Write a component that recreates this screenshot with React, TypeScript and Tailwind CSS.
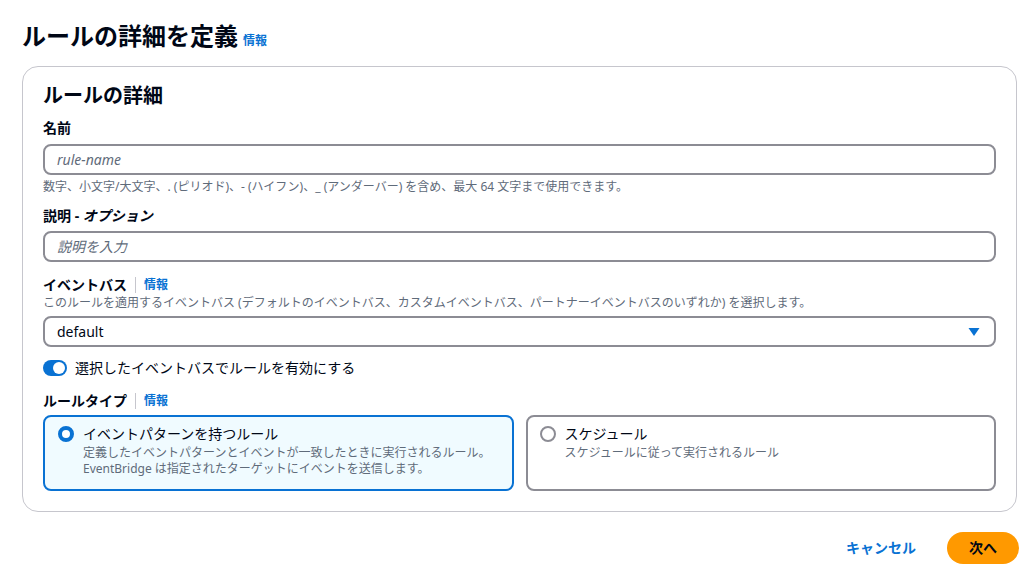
import React, { useState } from 'react';

const font = { fontFamily: '"Noto Sans", "Noto Sans CJK JP", sans-serif' };

const InfoLink: React.FC<{ divider?: boolean }> = ({ divider }) => (
  <span className="flex items-center">
    {divider && <span className="mx-2 h-4 w-px bg-[#c6c6cd]" />}
    <span className="text-xs font-bold text-[#0972d3]">情報</span>
  </span>
);

const TextInput: React.FC<{ placeholder: string }> = ({ placeholder }) => (
  <input
    placeholder={placeholder}
    className="h-[31px] w-full rounded-lg border-2 border-[#8c8c94] bg-white px-3 text-sm text-[#000716] outline-none placeholder:italic placeholder:text-[#5f6b7a]"
  />
);

const Tile: React.FC<{ selected: boolean; title: string; lines: string[]; onClick: () => void }> = ({
  selected,
  title,
  lines,
  onClick,
}) => (
  <div
    onClick={onClick}
    className={
      'flex h-[76px] cursor-pointer gap-[9px] rounded-lg border-2 pt-[6px] ' +
      (selected ? 'border-[#0972d3] bg-[#f0fbff] pl-[13px]' : 'border-[#8c8c94] bg-white pl-[12px]')
    }
  >
    <span
      className={
        'mt-[3px] h-4 w-4 shrink-0 rounded-full ' +
        (selected ? 'border-[4px] border-[#0972d3] bg-white' : 'border-2 border-[#8c8c94] bg-white')
      }
    />
    <div className="flex flex-col whitespace-nowrap">
      <span className="text-sm leading-[22px] text-[#000716]">{title}</span>
      {lines.map((l, i) => (
        <span key={i} className="text-xs leading-4 text-[#5f6b7a]">
          {l}
        </span>
      ))}
    </div>
  </div>
);

export default function App() {
  const [enabled, setEnabled] = useState(true);
  const [type, setType] = useState<'pattern' | 'schedule'>('pattern');

  return (
    <div className="min-h-[580px] w-full bg-white pt-[20px] pr-[15px] pl-[22px] text-[#000716]" style={font}>
      <div className="flex items-end gap-[5px]">
        <h1 className="text-2xl leading-8 font-bold">ルールの詳細を定義</h1>
        <span className="pb-[3px]">
          <InfoLink />
        </span>
      </div>

      <div className="mt-[14px] rounded-2xl border border-[#c6c6cd] px-5 pt-[15px] pb-5">
        <h2 className="text-xl leading-7 font-bold">ルールの詳細</h2>

        <div className="mt-[7px] flex flex-col">
          <label className="text-sm leading-[22px] font-bold">名前</label>
          <div className="mt-[5px]">
            <TextInput placeholder="rule-name" />
          </div>
          <p className="mt-[4px] text-xs leading-4 text-[#5f6b7a]">
            数字、小文字/大文字、. (ピリオド)、- (ハイフン)、_ (アンダーバー) を含め、最大 64 文字まで使用できます。
          </p>
        </div>

        <div className="mt-[10px] flex flex-col">
          <label className="text-sm leading-[22px] font-bold">
            説明 - <i>オプション</i>
          </label>
          <div className="mt-[4px]">
            <TextInput placeholder="説明を入力" />
          </div>
        </div>

        <div className="mt-[13px] flex flex-col">
          <div className="flex h-5 items-center">
            <span className="text-sm leading-5 font-bold">イベントバス</span>
            <InfoLink divider />
          </div>
          <p className="text-xs leading-4 text-[#5f6b7a]">
            このルールを適用するイベントバス (デフォルトのイベントバス、カスタムイベントバス、パートナーイベントバスのいずれか) を選択します。
          </p>
          <div className="mt-[5px] flex h-[31px] items-center justify-between rounded-lg border-2 border-[#8c8c94] bg-white pr-[14px] pl-3">
            <span className="text-sm">default</span>
            <svg width="12" height="10" viewBox="0 0 12 10">
              <path d="M0.5 1 L11.5 1 L6 9 Z" fill="#0972d3" />
            </svg>
          </div>
        </div>

        <label className="mt-[10px] flex cursor-pointer items-center gap-2" onClick={() => setEnabled(!enabled)}>
          <span
            className={
              'flex h-4 w-6 items-center rounded-full px-[2px] ' +
              (enabled ? 'justify-end bg-[#0972d3]' : 'justify-start bg-[#8c8c94]')
            }
          >
            <span className="h-3 w-3 rounded-full bg-white" />
          </span>
          <span className="text-sm leading-[22px]">選択したイベントバスでルールを有効にする</span>
        </label>

        <div className="mt-[12px] flex h-5 items-center">
          <span className="text-sm leading-5 font-bold">ルールタイプ</span>
          <InfoLink divider />
        </div>

        <div className="mt-[4px] grid grid-cols-2 gap-3">
          <Tile
            selected={type === 'pattern'}
            onClick={() => setType('pattern')}
            title="イベントパターンを持つルール"
            lines={[
              '定義したイベントパターンとイベントが一致したときに実行されるルール。',
              'EventBridge は指定されたターゲットにイベントを送信します。',
            ]}
          />
          <Tile
            selected={type === 'schedule'}
            onClick={() => setType('schedule')}
            title="スケジュール"
            lines={['スケジュールに従って実行されるルール']}
          />
        </div>
      </div>

      <div className="-mr-[2px] mt-5 flex items-center justify-end gap-[31px]">
        <button className="text-sm font-bold text-[#0972d3]">キャンセル</button>
        <button className="h-8 rounded-full bg-[#ff9900] px-[22px] text-sm font-bold text-[#000716]">次へ</button>
      </div>
    </div>
  );
}
